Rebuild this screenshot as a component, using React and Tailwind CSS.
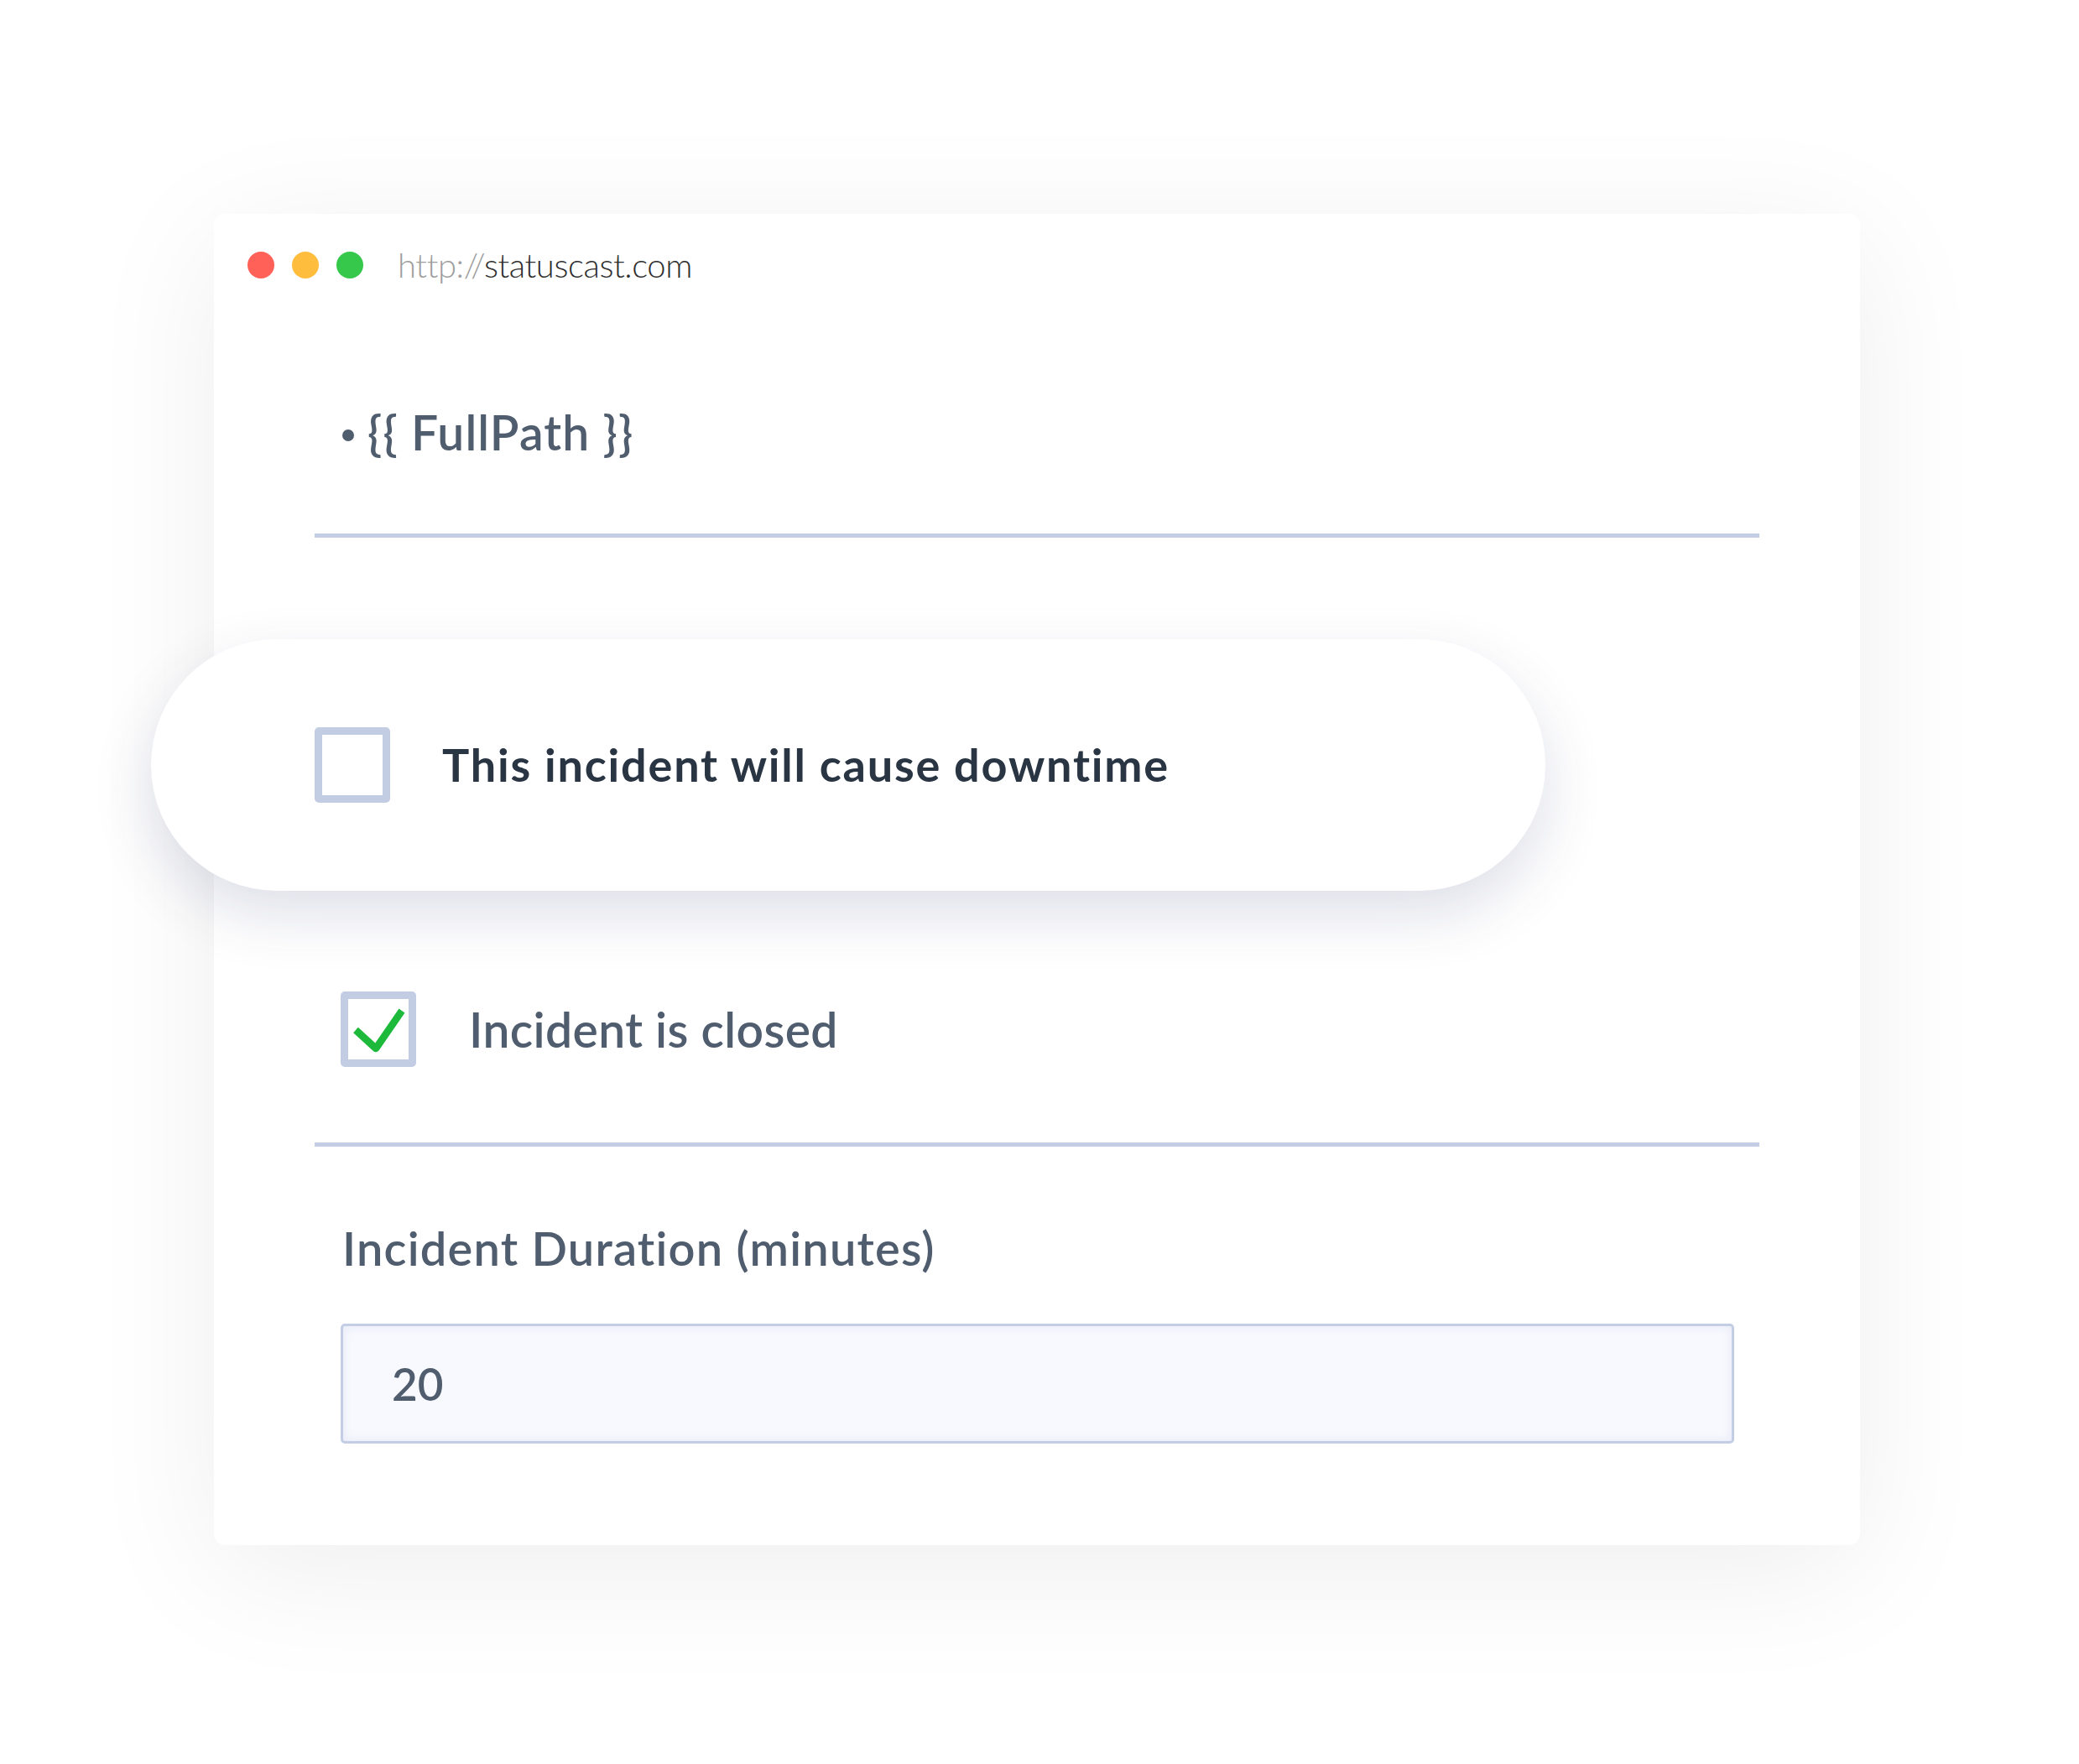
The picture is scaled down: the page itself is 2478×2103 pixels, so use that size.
import React from 'react';

const Checkbox = ({ checked }) => (
  <div className="w-[90px] h-[90px] shrink-0 rounded-[5px] border-[9px] border-[#c2cde4] bg-white">
    {checked && (
      <svg viewBox="0 0 72 72" className="w-full h-full">
        <path
          d="M9 37 L33 59 L64 14"
          fill="none"
          stroke="#1db93b"
          strokeWidth="8.5"
          strokeLinejoin="round"
        />
      </svg>
    )}
  </div>
);

const App = () => {
  return (
    <div className="min-h-[2103px] w-full bg-white pt-[255px] pl-[255px] font-['Lato',sans-serif] [font-variant-ligatures:none]">
      {/* Browser window */}
      <div className="w-[1962px] h-[1587px] rounded-[14px] bg-white shadow-[0_30px_160px_rgba(0,0,0,0.07)] flex flex-col">
        {/* Top bar */}
        <div className="flex items-center h-[32px] mt-[45px] ml-[40px]">
          <div className="flex gap-[21px]">
            <span className="w-[32px] h-[32px] rounded-full bg-[#ff6159]" />
            <span className="w-[32px] h-[32px] rounded-full bg-[#ffbd3e]" />
            <span className="w-[32px] h-[32px] rounded-full bg-[#35c84a]" />
          </div>
          <div className="ml-[41px] text-[40px] leading-none font-light tracking-[-0.4px]">
            <span className="text-[#9e9e9e]">http://</span>
            <span className="text-[#2e2e2e]">statuscast.com</span>
          </div>
        </div>

        <div className="px-[120px] flex flex-col">
          {/* Path row */}
          <div className="mt-[155px] ml-[33px] flex items-center gap-[16px]">
            <span className="w-[14px] h-[14px] rounded-full bg-[#4f5d6e] mt-[6px]" />
            <span className="text-[57px] leading-none font-semibold tracking-[1.1px] text-[#4f5d6e]">{'{{ FullPath }}'}</span>
          </div>

          <div className="mt-[92px] h-[5px] w-full bg-[#c3cde3]" />

          {/* Highlighted pill */}
          <div className="mt-[121px] -ml-[195px] w-[1662px] h-[300px] rounded-full bg-white shadow-[0_28px_70px_rgba(48,58,110,0.16)] flex items-center pl-[195px] gap-[62px]">
            <Checkbox />
            <span className="text-[54px] leading-none font-bold tracking-[1.8px] text-[#2a3544]">This incident will cause downtime</span>
          </div>

          {/* Closed row */}
          <div className="mt-[120px] ml-[31px] flex items-center gap-[63px]">
            <Checkbox checked />
            <span className="text-[57px] leading-none font-semibold tracking-[0.4px] text-[#4f5d6e]">Incident is closed</span>
          </div>

          <div className="mt-[90px] h-[5px] w-full bg-[#c3cde3]" />

          {/* Duration */}
          <div className="mt-[93px] ml-[33px] text-[56px] leading-none font-semibold tracking-[1.2px] text-[#4f5d6e]">
            Incident Duration (minutes)
          </div>
          <div className="mt-[62px] ml-[31px] w-[1661px] h-[143px] rounded-[5px] border-[3px] border-[#c3cee5] bg-[#f8f9fe] shadow-[inset_0_0_12px_rgba(190,200,230,0.35)] flex items-center pl-[58px]">
            <span className="text-[53px] leading-none font-semibold text-[#4f5d6e]">20</span>
          </div>
        </div>
      </div>
    </div>
  );
};

export default App;
